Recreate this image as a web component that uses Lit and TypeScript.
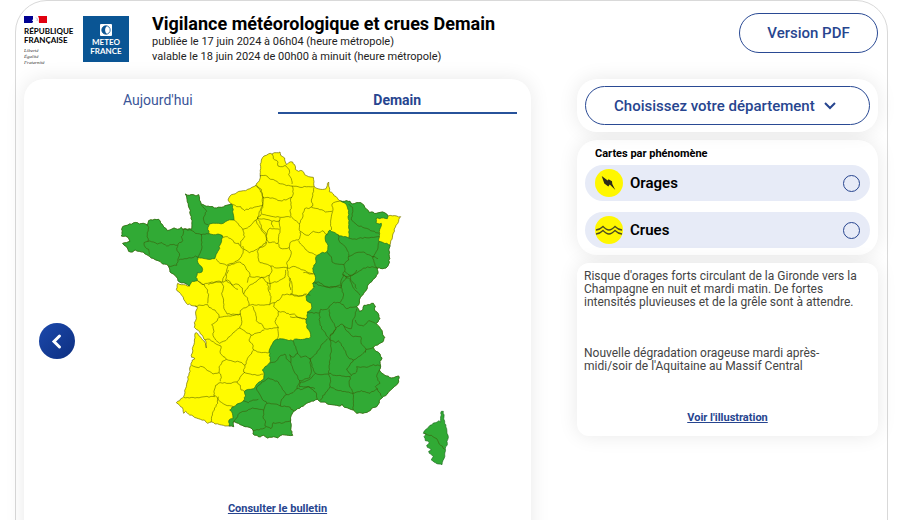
import { LitElement, html, css, svg } from "lit";
import { customElement, state } from "lit/decorators.js";

type Pt = [number, number];

/** Parses "x,y x,y ..." given relative to the corner of one quarter of the map. */
const quarter = (ox: number, oy: number) => (s: string): Pt[] =>
  s.trim().split(/\s+/).map((p) => {
    const [x, y] = p.split(",").map(Number);
    return [x + ox, y + oy];
  });
const nw = quarter(330, 420);
const ne = quarter(750, 420);
const sw = quarter(495, 810);
const se = quarter(870, 810);

/** Adds small deterministic bends so that borders look like surveyed ones. */
function roughen(pts: Pt[]): Pt[] {
  const out: Pt[] = [];
  for (let i = 0; i < pts.length - 1; i++) {
    const [a, b] = [pts[i], pts[i + 1]];
    const len = Math.hypot(b[0] - a[0], b[1] - a[1]);
    const n = Math.max(1, Math.round(len / 6));
    out.push(a);
    for (let k = 1; k < n; k++) {
      const x = a[0] + ((b[0] - a[0]) * k) / n;
      const y = a[1] + ((b[1] - a[1]) * k) / n;
      const h = Math.sin(x * 12.9 + y * 78.2) * 43758.5;
      const j = (h - Math.floor(h) - 0.5) * 4;
      out.push([x - ((b[1] - a[1]) / len) * j, y + ((b[0] - a[0]) / len) * j]);
    }
  }
  out.push(pts[pts.length - 1]);
  return out;
}
const line = (pts: Pt[]) => "M" + roughen(pts).map((p) => p.map((v) => v.toFixed(1)).join(" ")).join("L");
const area = (pts: Pt[]) => line([...pts, pts[0]]) + "Z";

const bretagneNord = nw(`35,268 38,260 58,252 82,248 88,252 100,250 112,256 116,242 134,238 146,238 152,250 162,262
 172,272 180,270 192,264 202,268 214,262 218,268 232,268 245,268 246,255 244,230 238,205 232,185 226,162 238,166
 250,164 258,168 266,164 268,180 273,192 283,196 300,200 320,204 335,202 350,196 364,192`);
const manche = [
  ...nw(`358,186 354,180 360,168 380,158 400,152 420,146 438,136 448,122 452,108 452,80 454,60 462,48 475,42`),
  ...ne(`66,42 80,38 90,36 92,46 104,54 106,66 110,74 116,68 128,66 134,74 136,88 146,94 156,92 164,104 176,110
 190,112 192,125 192,138 196,143 212,148 228,146 232,136 236,126 236,138 238,155 250,162 262,174`),
];
const lorraine = ne(`272,183 284,184 300,184 308,192 320,188 332,188 342,196 350,208 358,218 364,216 380,220 398,216
 410,222 414,228`);
const alsace = ne(`440,228 452,230 446,244 436,262 428,285`);
const est = [
  ...ne(`420,315 416,330 418,350 416,372 408,384 398,386 386,382 382,388 384,396`),
  ...se(`258,20 246,34 232,48 228,62 214,78 208,90 206,104 200,110 206,118 208,124 216,122 222,106 234,104 250,100
 256,108 254,122 264,130 270,146 264,156 258,160 268,170 276,182 278,194 284,202 278,216 256,226 250,232 258,244
 270,252 276,264 270,274 272,288 268,300 276,310 290,318 304,324 318,320 326,318 326,334 318,346 304,358 292,372
 276,384 270,388 268,398 260,410 244,416 236,424 224,428 218,430 208,428 200,430 190,420 178,416 164,412 156,402
 148,408 140,406 126,404 112,402 106,396 92,396 82,388 60,396 40,408 18,420 6,432 2,450 2,480 8,496`),
  ...sw(`370,496 352,494 338,504 326,500 308,504 296,496 280,500 264,492 264,480 258,474 240,470 226,464 214,458
 204,456 206,470 192,468`),
];
const atlantique = [
  ...sw(`180,468 164,464 150,462 140,456 128,460 118,450 100,446 84,438 70,432 62,424 56,430 54,418 44,406 34,398
 44,392 56,380 64,350 72,310 78,280 82,270 90,266 84,262 80,262 82,236 88,210 90,190 94,188 106,200 118,214
 124,234 122,212 114,200 104,186 94,178 88,172 88,158 94,146 92,132 94,120 96,110 90,108 78,106 64,100 56,88
 50,76 42,66 34,58 38,40 56,44`),
];
const bretagneSud = nw(`238,438 222,428 208,426 200,412 190,402 180,396 178,384 174,376 158,372 150,364 138,360
 124,354 114,346 100,336 88,334 76,330 68,336 56,334 52,324 38,310 50,308 60,304 54,292 46,288 34,288 36,278`);

const france = area([...bretagneNord, ...manche, ...lorraine, ...alsace, ...est, ...atlantique, ...bretagneSud]);
const vertOuest = area([
  ...bretagneNord,
  ...nw(`368,196 372,240 352,242 340,250 320,250 298,252 294,262 296,280 310,284 324,282 336,286 338,292 330,315
 326,330 318,344 314,356 294,358 276,354 264,352 262,362 270,376 278,388 276,396 262,398 258,412 262,422 246,424`),
  ...bretagneSud,
]);
const vertEst = area([
  ...lorraine,
  ...ne(`412,236 394,234 378,236 378,248 388,252 394,250 392,262 388,275 388,292 386,304 400,308`),
  ...est,
  ...sw(`192,450 204,446 202,430 194,420 206,410 222,400 236,392 242,378 238,364 256,358 270,352 282,336 296,328
 298,312 292,300 300,290 314,278 316,262 312,246 322,222 334,208 344,206 372,212 400,208 432,206`),
  ...se(`62,200 60,186 52,176 48,152 52,142 52,126 64,118 64,100 50,92 48,78 60,64 74,50`),
  ...ne(`190,440 188,430 196,420 192,400 188,385 196,372 198,350 212,340 230,336 234,316 226,300 226,288 234,280
 240,270 250,276 264,284 280,290 296,294 298,270 296,248 294,230 296,212 290,196 282,188`),
]);
const corse = area(se(`454,424 460,424 462,440 464,460 470,476 474,496 472,520 466,536 464,552 462,566 456,584
 446,582 432,576 424,570 430,560 418,550 416,544 424,540 412,532 410,526 418,518 406,512 402,500 408,492 400,490
 408,478 420,466 436,458 446,452 452,456 452,440`));

const limites = (q: (s: string) => Pt[], s: string) => s.split("|").map((l) => line(q(l))).join("");
const departements = [
  limites(nw, `108,252 116,262 112,284 114,304|114,304 102,308 106,322 116,328 118,344
|114,304 130,306 142,312 156,308 170,318 186,314 202,316|218,268 220,280 214,290 218,302 204,312 200,326 208,340 206,352 204,366 200,376 176,378
|206,360 224,356 244,354 256,348 264,352|274,282 274,300 276,320 270,340 264,352
|220,268 246,272 256,280 274,284 296,282|273,194 290,214 280,234 284,250 294,254
|336,286 340,292 352,290 362,296 370,302 372,308 386,310 392,318|372,240 382,248 392,260 400,274 404,290 392,304 392,318
|392,318 400,328 396,344 386,360 370,370 350,376 330,370 318,356|364,192 380,200 392,200 404,212 420,204 440,200 458,196
|438,136 448,146 456,160 460,178 458,196|458,196 452,210 444,230 438,240 424,254 412,264 398,268
|438,240 446,256 454,270 466,284 470,300 466,310 452,320 436,330 418,338 402,328 398,318
|354,376 350,390 342,410 338,426|262,422 280,434 300,428 322,424 338,426
|354,376 372,372 388,366 402,374 410,390 420,404 414,418 412,428|338,428 352,420 362,428 370,440 384,448`),
  limites(ne, `66,42 70,56 84,66 84,78 98,80 106,76|106,76 118,90 116,104 124,116 126,132
|28,108 46,106 62,118 76,122 86,130 104,134 126,138|38,172 54,172 74,176 90,182 108,180 126,172
|20,136 34,148 38,172 38,196 34,220|126,138 150,142 176,140 192,140|126,138 130,160 122,176 124,200 120,210 122,228
|34,220 50,226 70,230 90,232 108,230 122,232|122,228 134,240 148,252
|192,142 188,160 184,180 188,198 180,204 164,206 158,220 156,236 148,252|184,202 204,206 226,216 246,214
|272,182 256,186 246,192 248,214|248,214 244,230 242,250 244,270
|148,252 150,274 162,282 176,286 190,274 206,278 216,272 232,284|90,234 88,250 90,270 86,290 84,310
|34,222 22,234 30,250 36,268 50,284 54,270 60,264 72,266 88,268|22,234 48,238 66,244 90,242|66,244 64,252 70,262
|50,284 50,300 56,308 68,306 84,310|84,310 90,324 104,326 118,322 120,308 134,302 144,300 150,290 150,276
|50,306 44,318 30,322 22,334 24,352 30,368 48,372 62,378 80,384 100,382 112,384
|118,322 124,340 118,356 110,370 112,384|146,302 156,316 166,328 180,338 200,346|112,384 136,380 160,390 176,398 194,402
|62,378 66,392 58,406 58,420 60,450|112,384 114,400 118,420 122,450|0,410 20,410 38,412 58,406
|296,192 308,202 306,222 304,240 322,256 344,264 362,272 388,280|296,294 320,298 344,292 364,292 388,290
|388,304 384,324 376,340 370,352|264,284 268,304 286,320 296,338|296,350 314,340 340,336 356,344 370,350 384,356
|230,336 244,350 246,366 262,372 282,374 296,360 296,340|282,374 284,394 300,406 324,396 340,384 366,380 384,384
|368,350 372,366 382,386|284,394 278,404 290,412 280,424 272,444|300,406 302,420 312,430 320,446
|188,430 206,426 220,436 240,444 260,440 272,444`),
  limites(sw, `98,32 118,44 128,60 130,80 128,100|90,108 108,106 128,104 132,112|130,44 148,38 168,36
|168,36 176,50 170,70 176,90 176,110 186,132|132,112 150,120 162,134 162,142|190,0 184,14 182,30 200,44 216,42 232,54 236,72
|236,72 248,84 252,106 236,114 226,122 226,132 204,132 186,132|236,72 250,50 268,38 278,30 290,22 308,38 318,40
|308,38 310,60 318,80 314,104|252,106 280,104 314,104 328,98|318,40 340,34 360,22 362,0|376,24 382,50 380,72
|328,98 346,86 352,74 366,72 380,74 400,78 424,72 436,76|262,108 272,130 274,152 292,164 298,176
|224,174 250,190 258,196 280,188 298,180|328,98 326,110 340,124 338,140 330,154 340,172|298,176 320,176 340,172
|258,196 252,210 262,222 266,240|340,172 340,190 336,208|266,240 290,248 312,248|340,124 360,126 374,134 388,132 400,142 424,150
|162,142 152,156 140,164 146,180 144,196 152,210 164,220|162,142 190,138 226,132
|164,220 182,212 200,194 214,180 224,174 230,160 226,132|118,210 134,208 150,220 168,228
|168,228 166,250 180,262 184,268 172,274 162,290 162,308|184,268 204,274 224,276 240,286
|266,240 254,256 246,270 240,286 236,306|80,286 96,292 112,290 128,302 144,312 162,308|162,308 168,318 166,334
|240,306 228,318 216,336 192,340 166,338|166,338 152,346 148,360 146,376 156,382|56,382 90,384 120,380 150,380
|156,382 164,394 180,404 200,408 206,410|216,336 226,346 228,360 238,364|236,306 256,312 276,316 296,312
|160,380 158,400 148,420 140,440 138,456|274,354 280,366 290,384 306,400|274,354 290,336 310,324 326,330 340,336 350,352 364,374
|374,254 378,270 382,290 388,306 398,320 404,332|314,280 330,276 340,264 348,256 360,252 368,270 378,278
|384,212 392,230 398,250 384,262 374,254|364,374 384,368 396,356 412,358 430,350 450,356
|404,332 400,344 396,356|346,408 350,388 364,374|306,400 330,402 346,408 370,410 388,424
|222,430 240,424 262,414 276,416 296,420 300,408 306,400|296,420 294,440 302,456 300,468
|300,468 318,476 324,458 350,460 378,452|264,482 282,480 302,472|222,430 218,440 206,456|234,392 250,398 264,390 280,388`),
  limites(se, `0,72 20,78 48,74|0,140 24,142 48,148|40,8 70,12|74,40 90,46 110,52 130,50 154,46 160,70 158,86 148,98
|160,14 152,44|52,126 72,130 90,128|90,128 92,118 110,118 124,104 132,96 148,98|88,130 90,160 98,180 112,200 120,210
|118,118 120,140 128,156 138,176 130,190 120,198|160,14 166,20 180,28 186,44 196,60 210,76|166,20 190,14 200,0
|150,98 160,104 170,116 186,112 200,110|138,174 156,162 164,170 184,176 188,150 196,134 200,116
|196,150 204,164 220,168 236,152 256,160|160,166 172,184 190,200 212,200 214,222 228,238 226,248|138,176 120,198 120,210
|120,210 136,218 144,212 160,232 168,250 178,266 190,270|190,270 210,258 228,242
|190,270 180,284 170,300 184,316 200,306 200,290 230,292 250,284 270,288|228,238 250,232
|120,210 124,240 120,270 116,310|116,310 134,316 150,316 180,320|112,206 96,222 80,250 60,266
|60,266 66,290 76,310 90,314 116,312|76,310 66,322 50,332 32,336 28,350|28,350 60,352 80,372 82,388
|116,312 122,334 120,350 106,368 90,392|120,350 140,360 170,366 188,370|180,320 178,346 190,370|184,316 180,320
|188,370 190,400 190,420|188,370 214,362 240,370 262,356 276,380|268,300 260,320 270,340 256,350 262,358
|22,250 32,262 46,258 60,266 64,300 60,322 40,330 28,332|402,490 424,496 440,506 452,526 464,538`),
].join("");

@customElement("vigilance-map")
export class VigilanceMap extends LitElement {
  static styles = css`
    :host { display: block; width: 100%; max-width: 345px; }
    svg { display: block; width: 100%; }
    .jaune { fill: #fffb00; stroke: #6b6800; stroke-width: 2; }
    .vert { fill: #31aa35; stroke: #1d6a20; stroke-width: 2; }
    .limites { fill: none; stroke: #3d4a00; stroke-opacity: 0.75; stroke-width: 2; }
  `;
  render() {
    return svg`<svg viewBox="315 420 1035 1005" role="img" aria-label="Carte de vigilance">
      <path class="jaune" d=${france} />
      <path class="vert" d=${vertOuest} /><path class="vert" d=${vertEst} /><path class="vert" d=${corse} />
      <path class="limites" d=${departements} />
    </svg>`;
  }
}

@customElement("app-root")
export class AppRoot extends LitElement {
  @state() private tab = 1;

  static styles = css`
    :host { display: block; height: 100vh; overflow: hidden; background: #fff; color: #000; font-family: Roboto, "Liberation Sans", sans-serif; }
    * { box-sizing: border-box; }
    button, select, input { font: inherit; margin: 0; }
    h1, h2, p { margin: 0; }
    .shell { margin: 0 11px 0 15px; border: 1px solid #d9d9d9; border-radius: 32px; min-height: 640px; padding: 0 9px 0 8px; }
    .head { display: flex; align-items: flex-start; height: 78px; padding-top: 12px; }
    .rf { width: 51px; margin: 2px 8px 0 0; }
    .flag { display: block; width: 23px; height: 9px; }
    .rf-name { margin-top: 3px; font: 700 8px/9px Lato, sans-serif; }
    .rf-motto { margin-top: 3px; font: italic 5px/6px "Liberation Serif", serif; color: #333; }
    .mf { display: flex; flex-direction: column; align-items: center; width: 46px; height: 46px; margin: 3px 23px 0 0; padding-top: 8px; background: #0a5594; color: #fff; font: 700 8px/9px Lato, sans-serif; text-align: center; }
    .mf svg { display: block; width: 12px; height: 12px; margin-bottom: 2px; }
    .titles { flex: 1; }
    h1 { font-size: 18px; line-height: 21px; font-weight: 700; white-space: nowrap; }
    .date { font-size: 11px; line-height: 15px; color: #222; }
    .pdf { width: 139px; height: 40px; border: 1px solid #2a4a94; border-radius: 20px; background: #fff; color: #27458f; font-size: 15px; font-weight: 500; }
    .cols { display: grid; grid-template-columns: minmax(0, 1fr) 301px; column-gap: 46px; align-items: start; }
    .card { background: #fff; box-shadow: 0 0 20px rgba(0, 0, 0, 0.09); border-radius: 20px; }
    .carte { position: relative; display: flex; flex-direction: column; align-items: center; min-height: 540px; padding: 0 14px; }
    .tabs { display: grid; grid-template-columns: 1fr 1fr; align-self: stretch; margin-bottom: 26px; }
    .tab { height: 35px; padding: 9px 0 0; border: 0; border-bottom: 2px solid transparent; background: none; color: #3b5598; font-size: 14px; line-height: 16px; }
    .tab.on { border-color: #27529a; color: #27458f; font-weight: 700; }
    .prev { position: absolute; left: 15px; top: 244px; width: 36px; height: 36px; padding: 0; border: 0; border-radius: 50%; background: linear-gradient(135deg, #1c49ac, #0d2f80); }
    .prev svg { display: block; width: 36px; height: 36px; }
    .link { color: #27458f; font-size: 11px; line-height: 13px; font-weight: 700; }
    .carte .link { margin-top: 27px; }
    .side { display: flex; flex-direction: column; gap: 8px; }
    .choix { position: relative; padding: 7px 8px; height: 53px; }
    .choix select { display: block; width: 100%; height: 39px; padding: 0 50px 0 28px; border: 1px solid #2a4a94; border-radius: 20px; appearance: none; background: #fff; color: #27458f; font-size: 15px; font-weight: 500; }
    .choix svg { position: absolute; right: 41px; top: 21px; width: 14px; height: 12px; pointer-events: none; }
    .pheno { padding: 7px 8px 7px; }
    h2 { padding-left: 10px; margin-bottom: 5px; font-size: 11px; line-height: 13px; font-weight: 700; }
    .row { display: flex; align-items: center; height: 36px; padding: 0 10px; border-radius: 18px; background: #e7ebf7; font-size: 15px; font-weight: 600; }
    .row + .row { margin-top: 11px; }
    .row svg { width: 28px; height: 28px; margin-right: 7px; }
    .row span { flex: 1; }
    .row input { width: 17px; height: 17px; appearance: none; border: 1px solid #27458f; border-radius: 50%; }
    .row input:checked { background: #27458f; }
    .texte { padding: 7px 12px 12px 7px; border-radius: 12px; color: #444; font-size: 12px; line-height: 13px; }
    .texte p + p { margin-top: 38px; }
    .texte .voir { margin-top: 38px; padding-left: 5px; text-align: center; }
  `;

  render() {
    return html`
      <main class="shell">
        <header class="head">
          <div class="rf">
            <svg class="flag" viewBox="0 0 23 9"><path fill="#000091" d="M0 1h9v7H0z" /><path fill="#e1000f" d="M14 1h9v7h-8z" /><path fill="#fff" d="M9 1h5l1 3-1 4H8l2-2H8l1-2z" /><path fill="none" stroke="#8b8bb5" stroke-width=".6" d="M12 2.500l1.500 1.500-.5 2" /></svg>
            <div class="rf-name">RÉPUBLIQUE<br />FRANÇAISE</div>
            <div class="rf-motto">Liberté<br />Égalité<br />Fraternité</div>
          </div>
          <div class="mf">
            <svg viewBox="0 0 12 12"><rect width="12" height="12" rx="1" fill="#fff" /><circle cx="6" cy="6" r="4.200" fill="none" stroke="#0a5594" stroke-width=".8" /><path fill="#0a5594" d="M7 1.800C0 1 0 11 7 10.200 4.500 8 4.500 4 7 1.800z" /></svg>
            <div>METEO<br />FRANCE</div>
          </div>
          <div class="titles">
            <h1>Vigilance météorologique et crues Demain</h1>
            <p class="date">publiée le 17 juin 2024 à 06h04 (heure métropole)</p>
            <p class="date">valable le 18 juin 2024 de 00h00 à minuit (heure métropole)</p>
          </div>
          <button class="pdf">Version PDF</button>
        </header>
        <div class="cols">
          <section class="card carte">
            <div class="tabs" role="tablist">
              ${["Aujourd'hui", "Demain"].map(
                (t, i) => html`<button role="tab" aria-selected=${this.tab === i} class="tab ${this.tab === i ? "on" : ""}" @click=${() => (this.tab = i)}>${t}</button>`
              )}
            </div>
            <vigilance-map></vigilance-map>
            <button class="prev" aria-label="Précédent">
              <svg viewBox="0 0 36 36"><path d="M20.500 13l-5.500 5.500 5.500 5.500" fill="none" stroke="#fff" stroke-width="3" stroke-linecap="round" /></svg>
            </button>
            <a class="link" href="#bulletin">Consulter le bulletin</a>
          </section>
          <aside class="side">
            <div class="card choix">
              <select aria-label="Département"><option>Choisissez votre département</option></select>
              <svg viewBox="0 0 14 12"><path d="M2 3l5 5 5-5" fill="none" stroke="#27458f" stroke-width="2" /></svg>
            </div>
            <section class="card pheno">
              <h2>Cartes par phénomène</h2>
              <label class="row">
                <svg viewBox="0 0 28 28"><circle cx="14" cy="14" r="14" fill="#fff700" /><path fill="#2b2b1a" d="M6.700 7l6 4.500.8-1.200 3.500 2 .3 2.700 3 6-5.500-5.500-1.500 2-4-3z" /></svg>
                <span>Orages</span><input type="radio" name="phenomene" />
              </label>
              <label class="row">
                <svg viewBox="0 0 28 28"><circle cx="14" cy="14" r="14" fill="#fff700" /><path fill="none" stroke="#4a4a20" stroke-width="1.300" d="M1 14c3 0 5-1.500 7-3.500 2 2 3.500 3.500 6 3.500s4-1.500 6-3.500c2 2 4 3.500 7 3.500M1 18c3 0 5-1.500 7-3.500 2 2 3.500 3.500 6 3.500s4-1.500 6-3.500c2 2 4 3.500 7 3.500" /></svg>
                <span>Crues</span><input type="radio" name="phenomene" />
              </label>
            </section>
            <section class="card texte">
              <p>Risque d'orages forts circulant de la Gironde vers la Champagne en nuit et mardi matin. De fortes intensités pluvieuses et de la grêle sont à attendre.</p>
              <p>Nouvelle dégradation orageuse mardi après-midi/soir de l'Aquitaine au Massif Central</p>
              <div class="voir"><a class="link" href="#illustration">Voir l'illustration</a></div>
            </section>
          </aside>
        </div>
      </main>
    `;
  }
}
